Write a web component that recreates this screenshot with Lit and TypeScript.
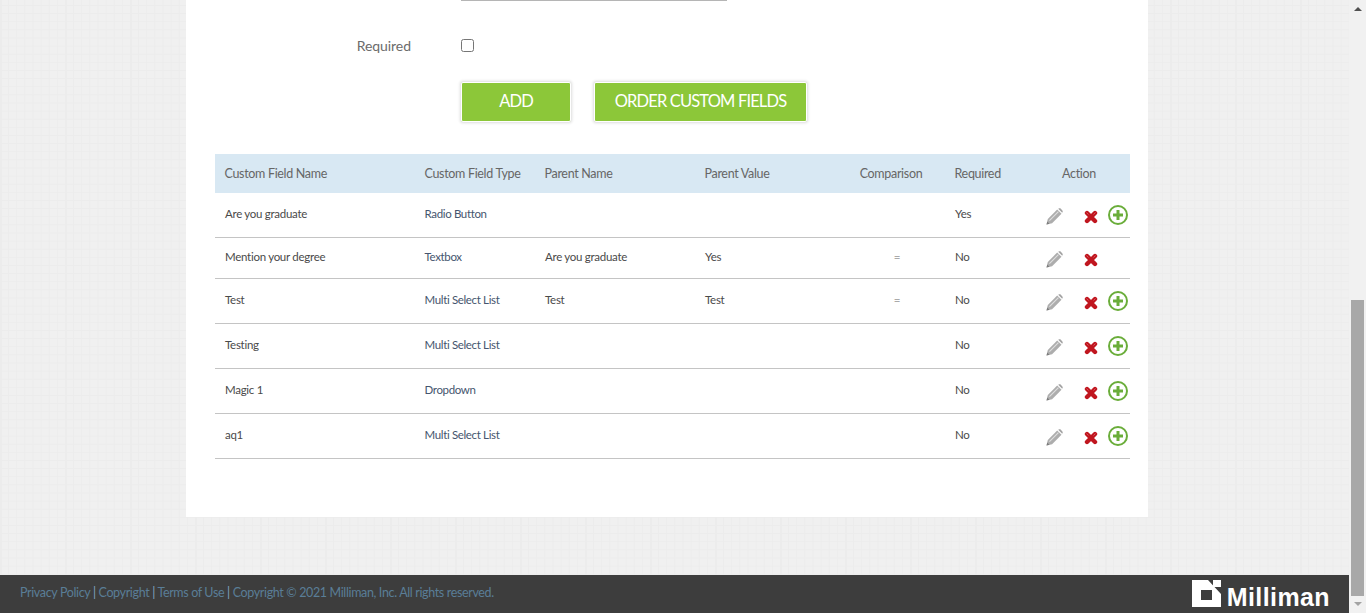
import { LitElement, css, html, svg } from 'lit'
import { customElement } from 'lit/decorators.js'

type Row = {
  name: string
  type: string
  parent?: string
  value?: string
  cmp?: string
  required: string
  add: boolean
}

const rows: Row[] = [
  { name: 'Are you graduate', type: 'Radio Button', required: 'Yes', add: true },
  { name: 'Mention your degree', type: 'Textbox', parent: 'Are you graduate', value: 'Yes', cmp: '=', required: 'No', add: false },
  { name: 'Test', type: 'Multi Select List', parent: 'Test', value: 'Test', cmp: '=', required: 'No', add: true },
  { name: 'Testing', type: 'Multi Select List', required: 'No', add: true },
  { name: 'Magic 1', type: 'Dropdown', required: 'No', add: true },
  { name: 'aq1', type: 'Multi Select List', required: 'No', add: true },
]

const pencil = svg`<svg width="17" height="17" viewBox="0 0 17 17"><path d="M.5 16.5l1.3-5.6L11.2 1.5l4.3 4.3-9.4 9.4z" fill="#adadad"/><path d="M12.2.8l1-.5c.5-.2 1-.1 1.4.3l1.8 1.8c.4.4.5.9.3 1.4l-.5 1z" fill="#a3a3a3"/><path d="M3.4 12.6l9-9" stroke="#dedede" stroke-width="1.2" fill="none"/><path d="M.5 16.5l.7-3 2.3 2.3z" fill="#7d7d7d"/></svg>`

const cross = svg`<svg width="14" height="14" viewBox="0 0 14 14"><path d="M3 3l8 8M11 3l-8 8" stroke="#c0161f" stroke-width="4.4" stroke-linecap="round"/><path d="M2.5 2.5l2 2M9.5 4.5l2-2" stroke="#d8525a" stroke-width="1"/></svg>`

const plus = svg`<svg width="20" height="20" viewBox="0 0 20 20"><circle cx="10" cy="10" r="9" fill="#fff" stroke="#6aad3a" stroke-width="2"/><path d="M10 5v10M5 10h10" stroke="#6aad3a" stroke-width="3"/></svg>`

@customElement('app-root')
export class AppRoot extends LitElement {
  protected render() {
    return html`
      <div class="page">
        <main class="card">
          <div class="line-input"></div>
          <div class="field">
            <label for="req">Required</label>
            <input id="req" type="checkbox" />
          </div>
          <div class="buttons">
            <button class="add">ADD</button>
            <button class="order">ORDER CUSTOM FIELDS</button>
          </div>
          <table>
            <colgroup>
              <col style="width:200px" />
              <col style="width:120px" />
              <col style="width:160px" />
              <col style="width:142px" />
              <col style="width:108px" />
              <col style="width:90px" />
              <col style="width:95px" />
            </colgroup>
            <thead>
              <tr>
                <th>Custom Field Name</th>
                <th>Custom Field Type</th>
                <th>Parent Name</th>
                <th>Parent Value</th>
                <th class="center">Comparison</th>
                <th>Required</th>
                <th class="center action-head">Action</th>
              </tr>
            </thead>
            <tbody>
              ${rows.map(
                (r) => html`
                  <tr class=${r.add ? 'tall' : 'short'}>
                    <td>${r.name}</td>
                    <td class="type">${r.type}</td>
                    <td>${r.parent ?? ''}</td>
                    <td>${r.value ?? ''}</td>
                    <td class="cmp">${r.cmp ?? ''}</td>
                    <td>${r.required}</td>
                    <td class="actions">
                      <div class="icons">
                        <span class="i-edit">${pencil}</span>
                        <span class="i-del">${cross}</span>
                        ${r.add ? html`<span class="i-add">${plus}</span>` : ''}
                      </div>
                    </td>
                  </tr>
                `,
              )}
            </tbody>
          </table>
        </main>
        <footer>
          <div class="legal">
            <a>Privacy Policy</a> <span>|</span> <a>Copyright</a> <span>|</span> <a>Terms of Use</a> <span>|</span>
            <a>Copyright © 2021 Milliman, Inc. All rights reserved.</a>
          </div>
          <div class="logo">
            <svg width="29" height="28" viewBox="0 0 29 28">
              <path fill-rule="evenodd" d="M0 0h16l13 14v13H0zM9 10v10h11V10z" fill="#fff" />
              <rect x="21" y="0" width="8" height="7" fill="#fff" />
            </svg>
            <span>Milliman</span>
          </div>
        </footer>
        <div class="scrollbar">
          <span class="up"></span>
          <span class="thumb"></span>
          <span class="down"></span>
        </div>
      </div>
    `
  }

  static styles = css`
    :host {
      display: block;
      font-family: 'Lato', 'Open Sans', sans-serif;
    }
    .page {
      position: relative;
      height: 613px;
      width: 1366px;
      overflow: hidden;
      display: flex;
      flex-direction: column;
      padding-right: 17px;
      box-sizing: border-box;
      background-color: #f0f0f0;
      background-image:
        linear-gradient(90deg, #ececec 1px, transparent 1px),
        linear-gradient(#ececec 1px, transparent 1px),
        linear-gradient(90deg, #ececec 1px, transparent 1px);
      background-size:
        65px 65px,
        8.125px 8.125px,
        8.125px 8.125px;
      background-position:
        1px 0,
        0 5px,
        0 0;
    }
    .card {
      width: 962px;
      height: 517px;
      margin-left: 186px;
      box-sizing: border-box;
      background: #fff;
      padding: 0 18px 0 29px;
      flex: none;
    }
    .line-input {
      width: 266px;
      height: 1px;
      margin-left: 246px;
      background: #b5b5b5;
    }
    .field {
      display: flex;
      align-items: center;
      height: 20px;
      margin-top: 34px;
    }
    .field label {
      width: 196px;
      text-align: right;
      font-size: 14px;
      letter-spacing: -0.05px;
      color: #6b6b6b;
    }
    .field input {
      width: 13px;
      height: 13px;
      margin: 0 0 0 50px;
    }
    .buttons {
      display: flex;
      gap: 23px;
      margin: 27px 0 0 246px;
    }
    button {
      height: 40px;
      box-sizing: border-box;
      border: 1px solid #fff;
      border-radius: 2px;
      box-shadow: 0 0 3px 1px #dcdcdc;
      background: #8cc739;
      color: #fff;
      font: 400 16.5px 'Lato', sans-serif;
      letter-spacing: -0.85px;
      padding: 0 0 3px;
    }
    .add {
      width: 110px;
    }
    .order {
      width: 213px;
    }
    table {
      width: 915px;
      margin-top: 32px;
      table-layout: fixed;
      border-collapse: collapse;
      font-size: 11.5px;
      color: #4a4a4a;
    }
    th {
      height: 39px;
      padding: 0 0 0 9.5px;
      background: #d8e8f3;
      text-align: left;
      font-weight: 400;
      color: #666;
      font-size: 12.5px;
      letter-spacing: -0.32px;
    }
    th.center {
      text-align: center;
      padding: 0;
    }
    th.action-head {
      padding-right: 7px;
    }
    td {
      padding: 0 0 4px 10px;
      border-bottom: 1px solid #c4c4c4;
      vertical-align: middle;
      letter-spacing: -0.28px;
    }
    tr.tall td {
      height: 40px;
    }
    tr.short td {
      height: 36px;
    }
    td.type {
      color: #45556e;
      padding-left: 9.5px;
      letter-spacing: -0.35px;
    }
    td.cmp {
      text-align: center;
      padding: 0 0 4px 12px;
      color: #aaa;
    }
    td.actions {
      padding: 0;
    }
    .icons {
      position: relative;
      height: 20px;
    }
    .icons span {
      position: absolute;
      display: block;
      line-height: 0;
    }
    .i-edit {
      left: 11px;
      top: 3px;
    }
    .i-del {
      left: 49px;
      top: 5px;
    }
    .i-add {
      left: 73px;
      top: 0;
    }
    footer {
      margin-top: 58px;
      height: 38px;
      flex: none;
      background: #3d3d3d;
      display: flex;
      align-items: center;
      justify-content: space-between;
      padding: 0 19px 0 20px;
    }
    .legal {
      font-size: 12.5px;
      letter-spacing: -0.36px;
      color: #5a7e97;
      padding-bottom: 4px;
    }
    .legal span {
      color: #7fa3bd;
    }
    .logo {
      display: flex;
      align-items: flex-end;
      gap: 6px;
      color: #fff;
      font: 700 25px 'Liberation Sans', sans-serif;
      line-height: 20px;
      height: 28px;
      letter-spacing: 0.4px;
    }
    .logo span {
      margin-bottom: 1px;
    }
    .scrollbar {
      position: absolute;
      top: 0;
      right: 0;
      width: 17px;
      height: 613px;
      background: #f1f1f1;
    }
    .thumb {
      position: absolute;
      top: 300px;
      left: 2px;
      width: 13px;
      height: 296px;
      background: #a8a8a8;
    }
    .up,
    .down {
      position: absolute;
      left: 5px;
      border-left: 4px solid transparent;
      border-right: 4px solid transparent;
    }
    .up {
      top: 7px;
      border-bottom: 4px solid #505050;
    }
    .down {
      bottom: 7px;
      border-top: 4px solid #a3a3a3;
    }
  `
}
